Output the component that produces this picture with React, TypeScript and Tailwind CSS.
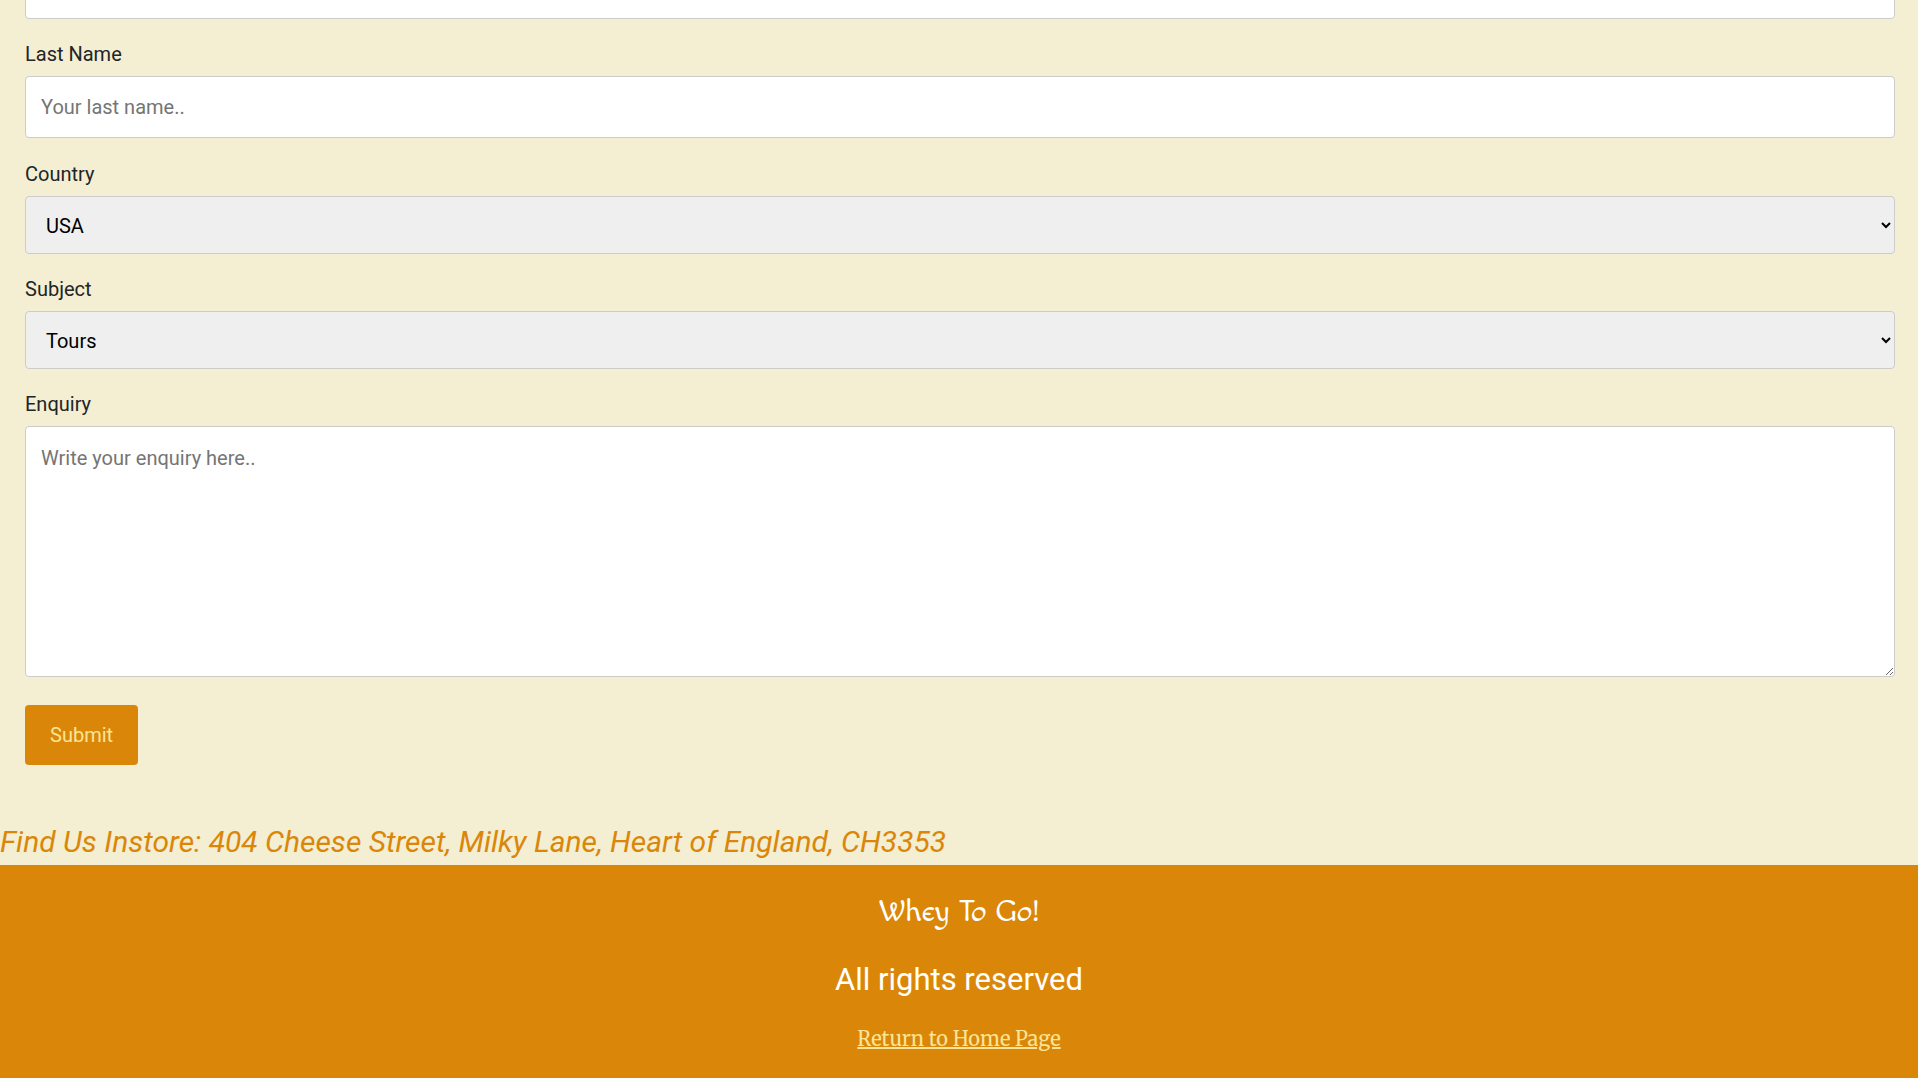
import { ReactNode } from 'react';

const box = 'block w-full rounded border border-[#cccccc] text-xl';
const textInput = 'h-[62px] bg-white px-[15px] py-4 leading-7 placeholder:text-[#757575]';
const dropDown = 'h-[58px] bg-[#efefef] py-4 pl-4 text-black';

function Field({ id, label, children }: { id: string; label: string; children: ReactNode }) {
  return (
    <div className="pt-5">
      <label htmlFor={id} className="mb-[7px] block text-xl leading-[30px]">
        {label}
      </label>
      {children}
    </div>
  );
}

export default function App() {
  return (
    <div className="bg-[#f4eed2] font-[Roboto,sans-serif] text-[#212529]">
      <form className="pr-[23px] pl-[25px]" onSubmit={(e) => e.preventDefault()}>
        <div className="flex h-[19px] items-end overflow-hidden">
          <input type="text" aria-label="First Name" className={`${box} ${textInput} shrink-0`} />
        </div>
        <Field id="lname" label="Last Name">
          <input id="lname" type="text" placeholder="Your last name.." className={`${box} ${textInput} mb-px`} />
        </Field>
        <Field id="country" label="Country">
          <select id="country" className={`${box} ${dropDown}`}>
            <option>USA</option>
            <option>United Kingdom</option>
            <option>Australia</option>
            <option>Canada</option>
          </select>
        </Field>
        <Field id="subject" label="Subject">
          <select id="subject" className={`${box} ${dropDown}`}>
            <option>Tours</option>
            <option>Orders</option>
            <option>Other</option>
          </select>
        </Field>
        <Field id="enquiry" label="Enquiry">
          <textarea
            id="enquiry"
            placeholder="Write your enquiry here.."
            className={`${box} h-[251px] resize-y bg-white px-[15px] py-4 leading-[30px] placeholder:text-[#757575]`}
          />
        </Field>
        <button
          type="submit"
          className="mt-7 block rounded bg-[#da8709] px-[25px] py-[15px] text-xl leading-[30px] text-[#fbe496]"
        >
          Submit
        </button>
      </form>
      <p className="mt-[54px] text-3xl leading-[46px] text-[#da8709] italic">
        Find Us Instore: 404 Cheese Street, Milky Lane, Heart of England, CH3353
      </p>
      <footer className="flex flex-col items-center bg-[#da8709] pt-6 pb-6 text-center">
        <p className="font-[Macondo,Lato,cursive] text-[31px] leading-[46px] text-white">Whey To Go!</p>
        <p className="mt-[22px] text-[31px] leading-[46px] text-white">All rights reserved</p>
        <a
          href="#home"
          className="mt-[21px] font-['Merriweather','DejaVu_Serif',serif] text-xl leading-[30px] text-[#fbe496] underline decoration-2"
        >
          Return to Home Page
        </a>
      </footer>
    </div>
  );
}
